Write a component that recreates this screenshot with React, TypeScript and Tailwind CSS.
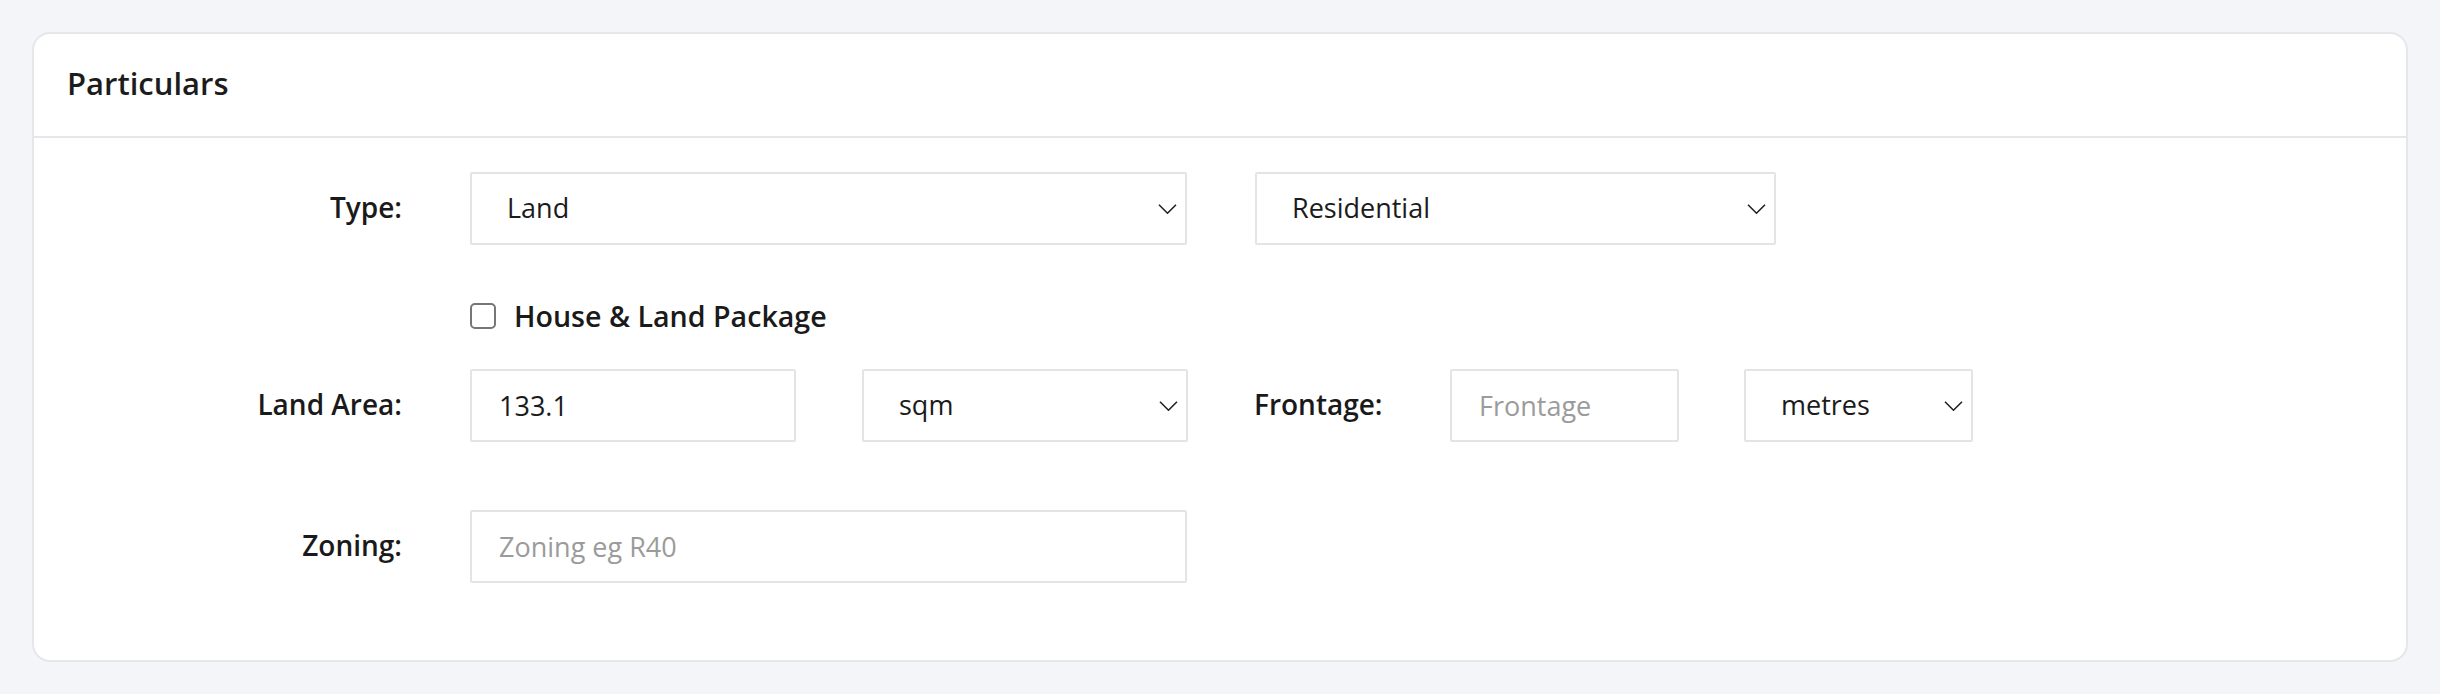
import React from "react";

const font = { fontFamily: '"Open Sans", "Noto Sans", sans-serif' };

function Chevron() {
  return (
    <svg
      className="pointer-events-none absolute right-[10px] top-1/2 -translate-y-1/2"
      width="19"
      height="11"
      viewBox="0 0 19 11"
      fill="none"
    >
      <path d="M1 1.2l8.5 8.5 8.5-8.5" stroke="#222" strokeWidth="1.6" />
    </svg>
  );
}

function Select({ value, width }: { value: string; width: string }) {
  return (
    <div className={`relative h-[73px] shrink-0 ${width}`}>
      <select
        defaultValue={value}
        className="h-full w-full appearance-none rounded-[2px] border-2 border-[#e4e4e4] bg-white pl-[35px] pr-[40px] text-[27px] text-[#1b1b1b] outline-none"
        style={font}
      >
        <option value={value}>{value}</option>
      </select>
      <Chevron />
    </div>
  );
}

function TextInput({
  value,
  placeholder,
  width,
}: {
  value?: string;
  placeholder?: string;
  width: string;
}) {
  return (
    <input
      defaultValue={value}
      placeholder={placeholder}
      className={`h-[73px] shrink-0 rounded-[2px] border-2 border-[#e4e4e4] bg-white pl-[27px] text-[27px] text-[#1b1b1b] outline-none placeholder:text-[#9b9b9b] ${width}`}
      style={font}
    />
  );
}

function Label({ children }: { children: React.ReactNode }) {
  return (
    <div className="w-[368px] shrink-0 pb-[3px] text-right text-[28px] font-semibold text-[#1a1a1a]">
      {children}
    </div>
  );
}

export default function App() {
  return (
    <div className="h-[694px] bg-[#f4f5f9] p-[32px]" style={font}>
      <div className="rounded-[18px] border-2 border-[#e6e7eb] bg-white">
        {/* header */}
        <div className="flex h-[104px] items-center border-b-2 border-[#e6e7eb] px-[33px] pb-[4px]">
          <h2 className="text-[31px] font-semibold text-[#1c1c1c]">Particulars</h2>
        </div>

        <div className="pb-[77px] pt-[34px]">
          {/* type */}
          <div className="flex items-center gap-[68px]">
            <Label>Type:</Label>
            <Select value="Land" width="w-[717px]" />
            <Select value="Residential" width="w-[521px]" />
          </div>

          {/* package */}
          <div className="mt-[51px] flex h-[40px] items-center gap-[68px]">
            <div className="w-[368px] shrink-0" />
            <label className="flex items-center gap-[18px]">
              <span className="h-[26px] w-[26px] rounded-[5px] border-2 border-[#767676] bg-white" />
              <span className="text-[28.6px] font-semibold text-[#1a1a1a]">House &amp; Land Package</span>
            </label>
          </div>

          {/* land area + frontage */}
          <div className="mt-[33px] flex items-center">
            <Label>Land Area:</Label>
            <div className="ml-[68px]">
              <TextInput value="133.1" width="w-[326px]" />
            </div>
            <div className="ml-[66px]">
              <Select value="sqm" width="w-[326px]" />
            </div>
            <div className="ml-[66px] w-[130px] shrink-0 whitespace-nowrap pb-[3px] text-[28px] font-semibold text-[#1a1a1a]">
              Frontage:
            </div>
            <div className="ml-[66px]">
              <TextInput placeholder="Frontage" width="w-[229px]" />
            </div>
            <div className="ml-[65px]">
              <Select value="metres" width="w-[229px]" />
            </div>
          </div>

          {/* zoning */}
          <div className="mt-[68px] flex items-center gap-[68px]">
            <Label>Zoning:</Label>
            <TextInput placeholder="Zoning eg R40" width="w-[717px]" />
          </div>
        </div>
      </div>
    </div>
  );
}
